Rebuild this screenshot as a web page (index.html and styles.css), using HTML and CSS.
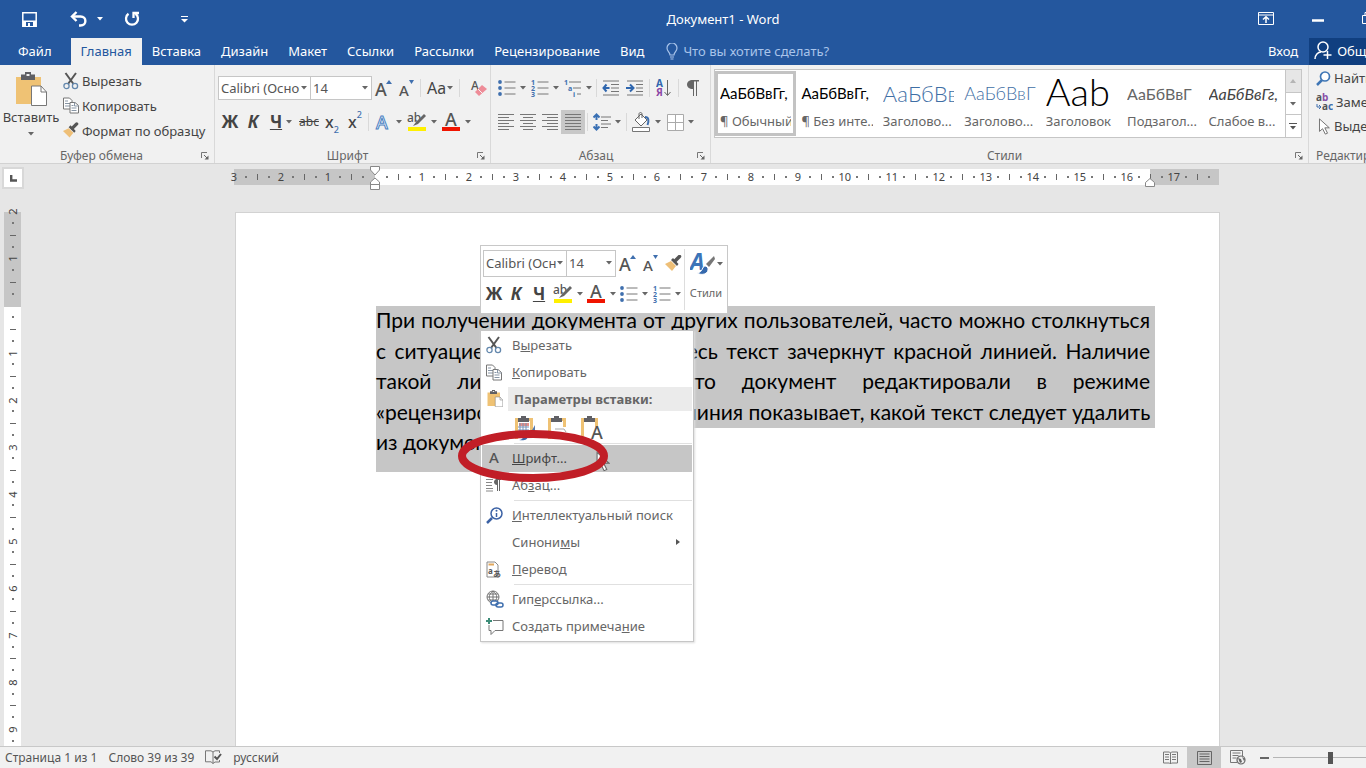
FILE: index.html
```html
<!DOCTYPE html>
<html lang="ru">
<head>
<meta charset="utf-8">
<title>Документ1 - Word</title>
<link rel="stylesheet" href="styles.css">
</head>
<body>
<svg class="defs" aria-hidden="true">
  <symbol id="caret" viewBox="0 0 6 4"><path d="M0 0h6L3 3.600z" fill="#666"/></symbol>
  <symbol id="launch" viewBox="0 0 8 8"><path d="M.5 6V.5H6" fill="none" stroke="#777"/><path d="M3 3l3 3" stroke="#666"/><path d="M7.500 3.500v4h-4z" fill="#666"/></symbol>
  <symbol id="scissors" viewBox="0 0 16 18"><path d="M2.500 1l8 11M13 1L5 12" stroke="#555" stroke-width="2" fill="none"/><circle cx="3.500" cy="14" r="2.600" fill="none" stroke="#6488ad" stroke-width="1.300"/><circle cx="12" cy="14" r="2.600" fill="none" stroke="#6488ad" stroke-width="1.300"/></symbol>
  <symbol id="copy" viewBox="0 0 16 17"><path d="M.5 1h6l2.500 2.500V12H.5z" fill="#fff" stroke="#777"/><path d="M2 4h3M2 6.500h5M2 9h5" stroke="#8795a5"/><path d="M7 5.500h5l3.500 3V16H7z" fill="#fff" stroke="#777"/><path d="M11.500 5.500V9h4M8.500 8.500h2M8.500 11h5M8.500 13.500h5" fill="none" stroke="#8795a5"/></symbol>
  <symbol id="brush" viewBox="0 0 17 17"><path d="M0 9l6-3 5 5-4 5z" fill="#eebf77"/><path d="M6 5l6 6 1.500-2-5.500-6z" fill="#555"/><path d="M10 6l4.500-4.500" stroke="#555" stroke-width="3.500" stroke-linecap="round"/></symbol>
  <symbol id="paste" viewBox="0 0 32 34"><path d="M1 5h25v27H1z" fill="#efc274"/><path d="M6 2.500h4V0h6v2.500h4V8H6z" fill="#5f5f63"/><path d="M11.500 2h3v2h-3z" fill="#efefef"/><path d="M16.500 14H26l5.500 6v13.500h-15z" fill="#fff" stroke="#777"/><path d="M26 14v6h5.500" fill="none" stroke="#777"/></symbol>
  <symbol id="grow" viewBox="0 0 20 18"><text x="1" y="17" class="glyph g18">A</text><path d="M12 5l3-4 3 4z" fill="#3f6fae"/></symbol>
  <symbol id="shrink" viewBox="0 0 20 18"><text x="2" y="17" class="glyph g15">A</text><path d="M12 1h5l-2.500 4z" fill="#3f6fae"/></symbol>
  <symbol id="eraser" viewBox="0 0 18 18"><text x="1" y="11" class="glyph g13">A</text><path d="M5 13l7-7 5 4-8 7z" fill="#ee8c98"/><path d="M8 10l5 5" stroke="#f8f0f1"/></symbol>
  <symbol id="outline-a" viewBox="0 0 18 18"><text x="2" y="16" class="glyph outline">A</text></symbol>
  <symbol id="marker" viewBox="0 0 20 20"><text x="0" y="10" class="glyph g13">ab</text><path d="M17 2l-8 8-3 4 5-2 8-8z" fill="#666"/><path d="M1 15h18v4H1z" fill="#fff000"/></symbol>
  <symbol id="font-color" viewBox="0 0 20 20"><text x="4" y="14" class="glyph g18">A</text><path d="M1 15h18v4H1z" fill="#f01400"/></symbol>
  <symbol id="bullets" viewBox="0 0 18 18"><path d="M6.500 3h11M6.500 9h11M6.500 15h11" stroke="#777"/><circle cx="2" cy="3" r="1.900" fill="#3f6fae"/><circle cx="2" cy="9" r="1.900" fill="#3f6fae"/><circle cx="2" cy="15" r="1.900" fill="#3f6fae"/></symbol>
  <symbol id="numbers" viewBox="0 0 18 18"><path d="M6.500 3h11M6.500 9h11M6.500 15h11" stroke="#777"/><text x="0" y="6" class="tiny">1</text><text x="0" y="12" class="tiny">2</text><text x="0" y="18" class="tiny">3</text></symbol>
  <symbol id="multi" viewBox="0 0 18 18"><path d="M5 3h12M9 9h8M13 15h4" stroke="#777"/><text x="0" y="6" class="tiny">1</text><text x="4" y="12" class="tiny">a</text><text x="9" y="18" class="tiny">i</text></symbol>
  <symbol id="dedent" viewBox="0 0 18 18"><path d="M1 2h16M9 5.500h8M9 9h8M9 12.500h8M1 16h16" stroke="#777"/><path d="M1.500 9h6M4.500 5.500L1.500 9l3 3.500" stroke="#2f66ae" stroke-width="2" fill="none"/></symbol>
  <symbol id="indent" viewBox="0 0 18 18"><path d="M1 2h16M10 5.500h7M10 9h7M10 12.500h7M1 16h16" stroke="#777"/><path d="M0 9h7M4 5.500L7.500 9 4 12.500" stroke="#2f66ae" stroke-width="2" fill="none"/></symbol>
  <symbol id="sort" viewBox="0 0 16 18"><text x="0" y="8" class="sort-a">А</text><text x="0" y="17" class="sort-b">Я</text><path d="M11.500 1v15M8.500 13l3 3.500 3-3.500" fill="none" stroke="#666"/></symbol>
  <symbol id="pilcrow" viewBox="0 0 12 18"><path d="M5.500 1H12v1.500H5.500z" fill="#666"/><path d="M6 1C2 1 0 3 0 5.500S2 10 6 10z" fill="#666"/><path d="M6.500 1v16M9.500 1v16" stroke="#666"/></symbol>
  <symbol id="al-left" viewBox="0 0 16 18"><path d="M0 1.500h16M0 4.500h11M0 7.500h16M0 10.500h11M0 13.500h16M0 16.500h11" stroke="#777"/></symbol>
  <symbol id="al-center" viewBox="0 0 16 18"><path d="M0 1.500h16M3 4.500h10M0 7.500h16M3 10.500h10M0 13.500h16M3 16.500h10" stroke="#777"/></symbol>
  <symbol id="al-right" viewBox="0 0 16 18"><path d="M0 1.500h16M5 4.500h11M0 7.500h16M5 10.500h11M0 13.500h16M5 16.500h11" stroke="#777"/></symbol>
  <symbol id="al-full" viewBox="0 0 16 18"><path d="M0 1.500h16M0 4.500h16M0 7.500h16M0 10.500h16M0 13.500h16M0 16.500h16" stroke="#777"/></symbol>
  <symbol id="spacing" viewBox="0 0 18 18"><path d="M8 4h10M8 7.500h7M8 11h10M8 14.500h7" stroke="#777"/><path d="M3.500 1v6M.5 4.500l3-3 3 3M3.500 11v6M.5 13.500l3 3 3-3" fill="none" stroke="#3a70b4" stroke-width="2"/></symbol>
  <symbol id="bucket" viewBox="0 0 20 20"><path d="M4 8l6-6 6 6-6 6z" fill="#fff" stroke="#666"/><path d="M8 7V2c0-2 3-2 3 0v4" fill="none" stroke="#666"/><path d="M14 5c4 0 4 4 2.500 8" fill="none" stroke="#3f6fae" stroke-width="2"/><path d="M1.500 15.500h17v4h-17z" fill="#fff" stroke="#777"/></symbol>
  <symbol id="borders" viewBox="0 0 17 17"><path d="M.5.5h16v16H.5zM8.500.5v16M.5 8.500h16" fill="#fff" stroke="#aaa"/></symbol>
  <symbol id="style-a" viewBox="0 0 26 26"><text x="0" y="19" class="style-letter">A</text><path d="M24 5l-8 8 3 3 6-8z" fill="#777"/><path d="M16 15c-5 0-2 6-9 7 5 3 12 1 11-5z" fill="#3569ad" stroke="#fff"/></symbol>
  <symbol id="find" viewBox="0 0 15 15"><circle cx="9" cy="5.500" r="4.500" fill="#fff" stroke="#3f76b5" stroke-width="1.700"/><path d="M6 9l-5 5" stroke="#3f76b5" stroke-width="2.500"/></symbol>
  <symbol id="pointer" viewBox="0 0 13 19"><path d="M1 1v14l3.500-3 3 6 2.500-1-3-6h5z" fill="#fff" stroke="#666"/></symbol>
  <symbol id="page-a" viewBox="0 0 16 17"><path d="M1 1h8l3 3v12H1z" fill="#fff" stroke="#888"/><path d="M2.500 3.500H8" stroke="#e0a75c" stroke-width="2"/><text x="2" y="13" class="micro">a</text><text x="7" y="16" class="micro">あ</text></symbol>
  <symbol id="globe" viewBox="0 0 18 18"><circle cx="7" cy="7" r="6" fill="#fff" stroke="#777"/><path d="M7 1v12M1 7h12M2 4h10M2 10h10M7 1C2 5 2 9 7 13M7 1c5 4 5 8 0 12" fill="none" stroke="#777"/><rect x="5" y="11" width="7" height="4" rx="2" fill="#fff" stroke="#3f6fae" stroke-width="1.500"/><rect x="10" y="13" width="7" height="4" rx="2" fill="none" stroke="#3f6fae" stroke-width="1.500"/></symbol>
  <symbol id="comment" viewBox="0 0 18 17"><path d="M7 2.500h10v10H9l-4 4v-4H3V7" fill="#fff" stroke="#777"/><path d="M3 0v6M0 3h6" stroke="#3d8c78" stroke-width="2"/></symbol>
  <symbol id="info" viewBox="0 0 17 17"><circle cx="10.500" cy="6.500" r="5.500" fill="#fff" stroke="#3c62a5" stroke-width="1.500"/><path d="M6 11l-5 5" stroke="#3c62a5" stroke-width="2.500"/><path d="M10.500 6v4" stroke="#3c62a5" stroke-width="1.500"/><circle cx="10.500" cy="3.800" r="1" fill="#3c62a5"/></symbol>
  <symbol id="para" viewBox="0 0 16 14"><path d="M0 1.500h7M0 4.500h6M0 7.500h6M0 10.500h7M0 13h7" stroke="#888"/><path d="M11 1C7 1 7 7 11 7z" fill="#666"/><path d="M11.500 1v12M13.500 1v12M10 1.500h5" stroke="#666"/></symbol>
</svg>

<header class="titlebar">
  <div class="quick">
    <button class="qbtn" aria-label="Сохранить"><svg width="15" height="15" viewBox="0 0 15 15"><path d="M.8.8h13.400v13.400H.8z" fill="none" stroke="#fff" stroke-width="1.500"/><path d="M1 8.500h13V14H1z" fill="#fff"/><path d="M4 10h7v4H4z" fill="#24579e"/><path d="M6 11h2v3H6z" fill="#fff"/></svg></button>
    <button class="qbtn undo" aria-label="Отменить"><svg width="17" height="16" viewBox="0 0 17 16"><path d="M2 5.500h8.500c6.500 0 6.500 9 0 9H9" fill="none" stroke="#fff" stroke-width="2.400"/><path d="M6.500 1L2 5.500 6.500 10" fill="none" stroke="#fff" stroke-width="2.400"/></svg></button>
    <button class="qbtn drop" aria-label="Список отмены"><svg width="6" height="4" viewBox="0 0 6 4"><path d="M0 0h6L3 3.500z" fill="#fff"/></svg></button>
    <button class="qbtn redo" aria-label="Повторить"><svg width="16" height="16" viewBox="0 0 16 16"><path d="M4.500 2.800A6 6 0 1 0 11.500 2.800" fill="none" stroke="#fff" stroke-width="2.300"/><path d="M9.500 7V2H15" fill="none" stroke="#fff" stroke-width="2.300"/></svg></button>
    <button class="qbtn custom" aria-label="Настройка панели"><svg width="7" height="7" viewBox="0 0 7 7"><path d="M0 .5h7" stroke="#fff"/><path d="M0 3h7L3.500 6.500z" fill="#fff"/></svg></button>
  </div>
  <h1 class="doc-title">Документ1 - Word</h1>
  <div class="winbtns">
    <button class="qbtn" aria-label="Параметры ленты"><svg width="16" height="13" viewBox="0 0 16 13"><path d="M.5.5h15v12H.5zM.5 3h15" fill="none" stroke="#fff"/><path d="M8 11V5M5 7.500L8 4.800l3 2.700" fill="none" stroke="#fff" stroke-width="1.500"/></svg></button>
    <button class="qbtn" aria-label="Свернуть"><svg width="12" height="12" viewBox="0 0 12 12"><path d="M0 8.500h12" stroke="#fff" stroke-width="2.500"/></svg></button>
    <button class="qbtn" aria-label="Развернуть"><svg width="12" height="12" viewBox="0 0 12 12"><path d="M.5 3.500h8v8h-8zM3 3V.5h8.500V9H9" fill="none" stroke="#fff"/></svg></button>
  </div>
</header>

<nav class="tabs">
  <button class="tab file">Файл</button>
  <button class="tab active">Главная</button>
  <button class="tab">Вставка</button>
  <button class="tab">Дизайн</button>
  <button class="tab">Макет</button>
  <button class="tab">Ссылки</button>
  <button class="tab">Рассылки</button>
  <button class="tab">Рецензирование</button>
  <button class="tab">Вид</button>
  <label class="tell"><svg width="12" height="17" viewBox="0 0 12 17"><path d="M4 12C4 9 1 8.500 1 5a5 5 0 0 1 10 0c0 3.500-3 4-3 7zM4 14h4M4.500 16h3" fill="none" stroke="#a9c4ea" stroke-width="1.200"/></svg><input type="text" placeholder="Что вы хотите сделать?"></label>
  <div class="account">
    <button class="tab login">Вход</button>
    <button class="share"><svg width="18" height="19" viewBox="0 0 18 19"><circle cx="9" cy="6" r="5" fill="none" stroke="#fff" stroke-width="1.500"/><path d="M1 18c0-4 3-7 6-7M13.500 10v8M9.500 14h8" fill="none" stroke="#fff" stroke-width="1.500"/></svg>Общий доступ</button>
  </div>
</nav>

<section class="ribbon">
  <div class="group clipboard">
    <div class="body">
      <button class="big"><svg width="32" height="34"><use href="#paste"/></svg><span>Вставить</span><svg width="6" height="4"><use href="#caret"/></svg></button>
      <div class="stack">
        <button class="cmd"><svg width="16" height="18"><use href="#scissors"/></svg>Вырезать</button>
        <button class="cmd"><svg width="16" height="17"><use href="#copy"/></svg>Копировать</button>
        <button class="cmd"><svg width="16" height="17"><use href="#brush"/></svg>Формат по образцу</button>
      </div>
    </div>
    <div class="caption"><span>Буфер обмена</span><button class="launch" aria-label="Буфер обмена: параметры"><svg width="8" height="8"><use href="#launch"/></svg></button></div>
  </div>

  <div class="group font">
    <div class="body rows">
      <div class="row">
        <label class="combo c93"><select aria-label="Шрифт"><option>Calibri (Основной текст)</option></select><svg width="6" height="4"><use href="#caret"/></svg></label>
        <label class="combo c61"><select aria-label="Размер"><option>14</option></select><svg width="6" height="4"><use href="#caret"/></svg></label>
        <button class="ib w24" aria-label="Увеличить"><svg width="20" height="18"><use href="#grow"/></svg></button>
        <button class="ib w22" aria-label="Уменьшить"><svg width="20" height="18"><use href="#shrink"/></svg></button>
        <i class="sep"></i>
        <button class="ib w34 case">Аа<svg width="6" height="4"><use href="#caret"/></svg></button>
        <i class="sep"></i>
        <button class="ib w34" aria-label="Очистить"><svg width="18" height="18"><use href="#eraser"/></svg></button>
      </div>
      <div class="row">
        <button class="ib w24 bold">Ж</button>
        <button class="ib w22 bold ital">К</button>
        <button class="ib w34 bold"><u>Ч</u><svg width="6" height="4"><use href="#caret"/></svg></button>
        <button class="ib w22 strike">abc</button>
        <button class="ib w24 xx">x<sub>2</sub></button>
        <button class="ib w22 xx">x<sup>2</sup></button>
        <i class="sep"></i>
        <button class="ib w34" aria-label="Эффекты"><svg width="18" height="18"><use href="#outline-a"/></svg><svg width="6" height="4"><use href="#caret"/></svg></button>
        <button class="ib w34" aria-label="Выделение"><svg width="20" height="20"><use href="#marker"/></svg><svg width="6" height="4"><use href="#caret"/></svg></button>
        <button class="ib w34" aria-label="Цвет"><svg width="20" height="20"><use href="#font-color"/></svg><svg width="6" height="4"><use href="#caret"/></svg></button>
      </div>
    </div>
    <div class="caption"><span>Шрифт</span><button class="launch" aria-label="Шрифт: параметры"><svg width="8" height="8"><use href="#launch"/></svg></button></div>
  </div>

  <div class="group paragraph">
    <div class="body rows">
      <div class="row">
        <button class="ib w33" aria-label="Маркеры"><svg width="18" height="18"><use href="#bullets"/></svg><svg width="6" height="4"><use href="#caret"/></svg></button>
        <button class="ib w33" aria-label="Нумерация"><svg width="18" height="18"><use href="#numbers"/></svg><svg width="6" height="4"><use href="#caret"/></svg></button>
        <button class="ib w33" aria-label="Многоуровневый"><svg width="18" height="18"><use href="#multi"/></svg><svg width="6" height="4"><use href="#caret"/></svg></button>
        <i class="sep"></i>
        <button class="ib w24" aria-label="Уменьшить отступ"><svg width="18" height="18"><use href="#dedent"/></svg></button>
        <button class="ib w24" aria-label="Увеличить отступ"><svg width="18" height="18"><use href="#indent"/></svg></button>
        <i class="sep"></i>
        <button class="ib w24" aria-label="Сортировка"><svg width="16" height="18"><use href="#sort"/></svg></button>
        <i class="sep"></i>
        <button class="ib w24" aria-label="Знаки"><svg width="12" height="18"><use href="#pilcrow"/></svg></button>
      </div>
      <div class="row">
        <button class="ib w22" aria-label="По левому краю"><svg width="16" height="18"><use href="#al-left"/></svg></button>
        <button class="ib w22" aria-label="По центру"><svg width="16" height="18"><use href="#al-center"/></svg></button>
        <button class="ib w22" aria-label="По правому краю"><svg width="16" height="18"><use href="#al-right"/></svg></button>
        <button class="ib w24 on" aria-label="По ширине"><svg width="16" height="18"><use href="#al-full"/></svg></button>
        <i class="sep"></i>
        <button class="ib w34" aria-label="Интервал"><svg width="18" height="18"><use href="#spacing"/></svg><svg width="6" height="4"><use href="#caret"/></svg></button>
        <i class="sep"></i>
        <button class="ib w34" aria-label="Заливка"><svg width="20" height="20"><use href="#bucket"/></svg><svg width="6" height="4"><use href="#caret"/></svg></button>
        <button class="ib w34" aria-label="Границы"><svg width="17" height="17"><use href="#borders"/></svg><svg width="6" height="4"><use href="#caret"/></svg></button>
      </div>
    </div>
    <div class="caption"><span>Абзац</span><button class="launch" aria-label="Абзац: параметры"><svg width="8" height="8"><use href="#launch"/></svg></button></div>
  </div>

  <div class="group styles">
    <div class="gallery">
      <button class="style selected"><span class="sample">АаБбВвГг,</span><span class="name">¶ Обычный</span></button>
      <button class="style"><span class="sample">АаБбВвГг,</span><span class="name">¶ Без инте...</span></button>
      <button class="style"><span class="sample h1s">АаБбВв</span><span class="name">Заголово...</span></button>
      <button class="style"><span class="sample h2s">АаБбВвГ</span><span class="name">Заголово...</span></button>
      <button class="style"><span class="sample ttl">Ааb</span><span class="name">Заголовок</span></button>
      <button class="style"><span class="sample subt">АаБбВвГ</span><span class="name">Подзагол...</span></button>
      <button class="style"><span class="sample weak">АаБбВвГг,</span><span class="name">Слабое в...</span></button>
      <div class="scroller">
        <button class="sc off" aria-label="Вверх"><svg width="6" height="4" viewBox="0 0 6 4"><path d="M0 4h6L3 0z" fill="#b5b5b5"/></svg></button>
        <button class="sc" aria-label="Вниз"><svg width="6" height="4"><use href="#caret"/></svg></button>
        <button class="sc" aria-label="Все стили"><svg width="8" height="7" viewBox="0 0 8 7"><path d="M0 .5h8" stroke="#555"/><path d="M1 3h6L4 6.500z" fill="#555"/></svg></button>
      </div>
    </div>
    <div class="caption"><span>Стили</span><button class="launch" aria-label="Стили: параметры"><svg width="8" height="8"><use href="#launch"/></svg></button></div>
  </div>

  <div class="group editing">
    <div class="stack">
      <button class="cmd"><svg width="15" height="15"><use href="#find"/></svg>Найти</button>
      <button class="cmd"><svg width="17" height="18" viewBox="0 0 17 18"><text x="0" y="8" class="rep">a<tspan fill="#8850a8">b</tspan></text><text x="6" y="17" class="rep">a<tspan fill="#3f6fae">c</tspan></text><path d="M1 11v3h4M3 12l2 2-2 2" fill="none" stroke="#3f6fae"/></svg>Заменить</button>
      <button class="cmd"><svg width="15" height="17" viewBox="-2 0 15 19"><use href="#pointer" width="13" height="19"/></svg>Выделить</button>
    </div>
    <div class="caption"><span>Редактирование</span></div>
  </div>
</section>

<main class="workspace">
  <div class="side">
    <button class="tabstop" aria-label="Табуляция"><svg width="7" height="7" viewBox="0 0 7 7"><path d="M1.200 0v5.500H7" fill="none" stroke="#555" stroke-width="2.400"/></svg></button>
    <div class="vruler" id="vruler"></div>
  </div>
  <div class="canvas">
    <div class="hruler">
      <div class="hmarks" id="hruler"></div>
      <svg class="stop left" width="10" height="24" viewBox="0 0 10 24"><path d="M.5.5h9V4L5 9 .5 4zM5 12l4.500 4v7.500h-9V16zM.5 18.500h9" fill="#fff" stroke="#888"/></svg>
      <svg class="stop right" width="10" height="9" viewBox="0 0 10 9"><path d="M5 .5l4.500 4v4h-9v-4z" fill="#fff" stroke="#888"/></svg>
    </div>
    <article class="page">
      <div class="lines">
        <p>При получении документа от других пользователей, часто можно столкнуться</p>
        <p>с ситуацией, когда часть или весь текст зачеркнут красной линией. Наличие</p>
        <p>такой линии обозначает, что документ редактировали в режиме</p>
        <p>«рецензирования». Эта красная линия показывает, какой текст следует удалить</p>
      </div>
      <p class="last">из документа.</p>
    </article>
  </div>
</main>

<footer class="status">
  <span>Страница 1 из 1</span>
  <span>Слово 39 из 39</span>
  <button class="proof" aria-label="Правописание"><svg width="17" height="15" viewBox="0 0 17 15"><path d="M8 13.500V2L6 .8H.5v11H6zM8 2l2-1.200h4.500V3M8 13.500l2-1.500h4.500v-2" fill="none" stroke="#777"/><path d="M9.500 6.500l2.500 2.500 4-5" fill="none" stroke="#555" stroke-width="2"/></svg></button>
  <span>русский</span>
  <div class="views">
    <button class="view" aria-label="Чтение"><svg width="15" height="14" viewBox="0 0 15 14"><path d="M.5 1h6l1 1 1-1h6v11h-6l-1 1-1-1h-6zM7.500 2v11" fill="none" stroke="#777"/><path d="M2 3.500h4M2 6h4M2 8.500h4M9 3.500h4M9 6h4M9 8.500h4" stroke="#777"/></svg></button>
    <button class="view on" aria-label="Разметка"><svg width="15" height="14" viewBox="0 0 15 14"><path d="M.5.5h14v13H.5z" fill="none" stroke="#666"/><path d="M2.500 3h10M2.500 5.500h10M2.500 8h10M2.500 10.500h10" stroke="#666"/></svg></button>
    <button class="view" aria-label="Веб"><svg width="16" height="15" viewBox="0 0 16 15"><path d="M7 12.500H.5v-12h12V6" fill="none" stroke="#777"/><path d="M2.500 3h8M2.500 5.500h6M2.500 8h4" stroke="#777"/><circle cx="11" cy="10" r="4" fill="#eee" stroke="#666" stroke-width="1.200"/><path d="M8 8l3 1 1 3-2 1zM12 7l3 2-1 2z" fill="#666"/></svg></button>
    <button class="minus" aria-label="Уменьшить масштаб"></button>
    <input class="zoom" type="range" min="0" max="100" value="50" aria-label="Масштаб">
  </div>
</footer>

<div class="mini">
  <div class="mini-main">
    <div class="row">
      <label class="combo c84"><select aria-label="Шрифт"><option>Calibri (Основной текст)</option></select><svg width="6" height="4"><use href="#caret"/></svg></label>
      <label class="combo c49"><select aria-label="Размер"><option>14</option></select><svg width="6" height="4"><use href="#caret"/></svg></label>
      <button class="ib w24" aria-label="Увеличить"><svg width="20" height="18"><use href="#grow"/></svg></button>
      <button class="ib w22" aria-label="Уменьшить"><svg width="20" height="18"><use href="#shrink"/></svg></button>
      <button class="ib w22" aria-label="Формат по образцу"><svg width="17" height="17"><use href="#brush"/></svg></button>
    </div>
    <div class="row">
      <button class="ib w22 bold">Ж</button>
      <button class="ib w22 bold ital">К</button>
      <button class="ib w24 bold"><u>Ч</u></button>
      <button class="ib w33" aria-label="Выделение"><svg width="20" height="20"><use href="#marker"/></svg><svg width="6" height="4"><use href="#caret"/></svg></button>
      <button class="ib w33" aria-label="Цвет"><svg width="20" height="20"><use href="#font-color"/></svg><svg width="6" height="4"><use href="#caret"/></svg></button>
      <button class="ib w33" aria-label="Маркеры"><svg width="18" height="18"><use href="#bullets"/></svg><svg width="6" height="4"><use href="#caret"/></svg></button>
      <button class="ib w33" aria-label="Нумерация"><svg width="18" height="18"><use href="#numbers"/></svg><svg width="6" height="4"><use href="#caret"/></svg></button>
    </div>
  </div>
  <button class="mini-styles"><span><svg width="26" height="26"><use href="#style-a"/></svg><svg width="6" height="4"><use href="#caret"/></svg></span>Стили</button>
</div>

<div class="menu">
  <button class="item"><svg width="16" height="18"><use href="#scissors"/></svg><span>В<u>ы</u>резать</span></button>
  <button class="item"><svg width="16" height="17"><use href="#copy"/></svg><span><u>К</u>опировать</span></button>
  <div class="head"><svg width="16" height="17"><use href="#paste"/></svg><b>Параметры вставки:</b></div>
  <div class="pastes">
    <button class="ib" aria-label="Сохранить форматирование"><svg width="24" height="26" viewBox="0 0 24 26"><path d="M3.500 24V4.500h15V16" fill="none" stroke="#efc274" stroke-width="3"/><path d="M5 3h3V1h5v2h3v4H5z" fill="#606065"/><path d="M6 8h10v3H6z" fill="#e58f87"/><path d="M5 12h11M5 15h11M5 18h9M7 8v12M10 8v12M13 8v12" stroke="#7690b5"/><path d="M22 10v11l-7 1z" fill="#5578ab"/><path d="M6 25c5 0 3-5 9-5 0 5-4 6-9 5z" fill="#3569ad"/></svg></button>
    <button class="ib" aria-label="Объединить"><svg width="24" height="26" viewBox="0 0 24 26"><path d="M3.500 24V4.500h15V12" fill="none" stroke="#efc274" stroke-width="3"/><path d="M5 3h3V1h5v2h3v4H5z" fill="#606065"/><path d="M9 14h9l2 3" fill="none" stroke="#aaa"/></svg></button>
    <button class="ib" aria-label="Только текст"><svg width="24" height="26" viewBox="0 0 24 26"><path d="M3.500 24V4.500h14V12" fill="none" stroke="#efc274" stroke-width="3"/><path d="M5 3h3V1h5v2h3v4H5z" fill="#606065"/><text x="12" y="24" class="glyph g18">A</text></svg></button>
  </div>
  <hr>
  <button class="item hot"><svg width="16" height="16" viewBox="0 0 16 16"><text x="3" y="13" class="glyph g15">A</text></svg><span><u>Ш</u>рифт...</span></button>
  <button class="item"><svg width="16" height="14"><use href="#para"/></svg><span>Аб<u>з</u>ац...</span></button>
  <hr>
  <button class="item"><svg width="17" height="17"><use href="#info"/></svg><span><u>И</u>нтеллектуальный поиск</span></button>
  <button class="item"><i></i><span>Синони<u>м</u>ы</span><svg class="arrow" width="4" height="6" viewBox="0 0 4 6"><path d="M0 0v6l4-3z" fill="#555"/></svg></button>
  <button class="item"><svg width="16" height="17"><use href="#page-a"/></svg><span><u>П</u>еревод</span></button>
  <hr>
  <button class="item"><svg width="18" height="18"><use href="#globe"/></svg><span>Гип<u>е</u>рссылка...</span></button>
  <button class="item"><svg width="18" height="17"><use href="#comment"/></svg><span>Создать примеча<u>н</u>ие</span></button>
</div>

<svg class="cursor" width="14" height="21"><use href="#pointer"/></svg>
<svg class="ring" width="152" height="54" viewBox="0 0 152 54"><ellipse cx="76" cy="27" rx="71" ry="22" fill="none" stroke="#c11e27" stroke-width="8"/></svg>
<script src="ruler.js"></script>
</body>
</html>
```
FILE: styles.css
```css
* { box-sizing: border-box; }
body { margin: 0; height: 100vh; display: flex; flex-direction: column; overflow: hidden; position: relative; font: 13px/18px "Noto Sans", "Open Sans", sans-serif; color: #444; background: #e6e6e6; }
button { border: 0; padding: 0; margin: 0; background: none; font: inherit; color: inherit; white-space: nowrap; }
svg { flex: none; display: block; }
.defs { display: none; }

.glyph { font-family: "Noto Sans", sans-serif; fill: #555; font-weight: 500; }
.g13 { font-size: 12px; }
.g15 { font-size: 15px; }
.g18 { font-size: 18px; }
.outline { font-size: 18px; fill: #fff; stroke: #4a80c2; }
.tiny { font: bold 7px "Noto Sans", sans-serif; fill: #3f6fae; }
.sort-a { font: bold 10px "Noto Sans", sans-serif; fill: #2f66ae; }
.sort-b { font: bold 10px "Noto Sans", sans-serif; fill: #8b45a5; }
.style-letter { font: italic bold 23px "Noto Sans", sans-serif; fill: #3b74b8; }
.rep { font: bold 10px "Noto Sans", sans-serif; fill: #555; }
.micro { font: bold 8px "Noto Sans", "Noto Sans CJK JP", sans-serif; fill: #555; }

.titlebar { flex: none; height: 38px; background: #24579e; color: #fff; display: grid; grid-template-columns: 1fr auto 1fr; align-items: center; overflow: hidden; }
.quick { display: flex; align-items: center; padding-left: 22px; }
.qbtn { display: flex; justify-content: center; }
.undo { margin-left: 33px; }
.drop { margin-left: 10px; }
.redo { margin-left: 21px; }
.custom { margin-left: 41px; }
.doc-title { margin: 0; font-size: 13px; font-weight: 400; padding-left: 80px; }
.winbtns { display: flex; justify-content: flex-end; align-items: center; gap: 38px; margin-right: -8px; padding-bottom: 2px; }

.tabs { flex: none; height: 27px; background: #24579e; color: #fff; display: flex; overflow: hidden; }
.tab { padding: 0 10px 2px; flex: none; }
.file { padding: 0 19px 2px 18px; }
.active { background: #f1f1f1; color: #24579e; }
.tell { display: flex; align-items: center; gap: 5px; padding: 0 0 1px 12px; }
.tell input { width: 200px; border: 0; padding: 0; background: none; font: inherit; color: #fff; }
.tell input::placeholder { color: #a9c4ea; opacity: 1; }
.account { margin-left: auto; display: flex; width: 108px; flex: none; gap: 1px; }
.share { flex: none; background: #103f80; display: flex; align-items: center; gap: 5px; padding: 0 0 2px 5px; }

.ribbon { flex: none; height: 99px; background: #f1f1f1; border-bottom: 1px solid #d2d2d2; display: flex; overflow: hidden; }
.group { flex: none; display: flex; flex-direction: column; border-right: 1px solid #d9d9d9; padding: 4px 3px 0; }
.clipboard { width: 215px; padding-top: 3px; padding-left: 2px; }
.font { width: 276px; }
.paragraph { width: 220px; padding-left: 4px; }
.styles { width: 598px; }
.editing { border: 0; width: 150px; padding-left: 7px; }
.body { flex: 1; display: flex; }
.caption { height: 15px; margin-top: auto; display: flex; align-items: center; font-size: 12px; line-height: 15px; color: #666; }
.caption span { flex: 1; text-align: center; }
.launch { width: 10px; }
.editing .caption span { text-align: left; }
.big { width: 58px; display: flex; flex-direction: column; align-items: center; padding-top: 4px; gap: 2px; justify-content: flex-start; }
.big svg:last-child { margin-top: 4px; }
.stack { display: flex; flex-direction: column; }
.clipboard .stack { padding-left: 3px; }
.cmd { display: flex; align-items: center; gap: 3px; height: 25px; }
.editing .cmd { height: 24px; }
.editing .stack { margin-top: -3px; }

.rows { flex-direction: column; padding-top: 7px; gap: 10px; }
.row { display: flex; align-items: center; height: 24px; }
.ib { display: flex; align-items: center; justify-content: center; height: 24px; gap: 4px; flex: none; }
.w22 { width: 22px; }
.w24 { width: 24px; }
.w33 { width: 33px; }
.w34 { width: 34px; }
.on { background: #c8c8c8; }
.sep { width: 1px; height: 18px; background: #d9d9d9; margin: 0 2px; flex: none; }
.bold { font-size: 17px; font-weight: 700; }
.ital { font-style: italic; }
.strike { font-size: 12px; text-decoration: line-through; }
.case { font-size: 16px; gap: 1px; }
.xx { font-size: 16px; font-weight: 500; gap: 0; }
.xx sub, .xx sup { font-size: 9px; line-height: 9px; color: #3f6fae; }
.xx sub { align-self: flex-end; }
.xx sup { align-self: flex-start; }

.combo { display: grid; height: 24px; border: 1px solid #c6c6c6; background: #fff; align-items: center; flex: none; }
.combo + .combo { border-left: 0; }
.combo select { grid-area: 1 / 1; appearance: none; border: 0; background: none; padding: 0 0 0 2px; margin-right: 10px; min-width: 0; font: inherit; color: #555; overflow: hidden; text-overflow: clip; }
.combo svg { grid-area: 1 / 1; justify-self: end; margin-right: 3px; }
.c93 { width: 93px; }
.c61 { width: 61px; }
.c84 { width: 84px; }
.c49 { width: 49px; }

.gallery { display: flex; height: 69px; border: 1px solid #c6c6c6; background: #fff; margin-right: 3px; }
.style { flex: 1 1 0; min-width: 0; display: flex; flex-direction: column; align-items: stretch; text-align: left; margin: 1px 0; border: 3px solid transparent; padding: 0 2px; }
.selected { border-color: #c3c3c3; }
.sample { height: 39px; line-height: 39px; overflow: hidden; font-family: "Lato", "Noto Sans", sans-serif; font-size: 15px; color: #000; }
.name { overflow: hidden; line-height: 16px; color: #666; }
.h1s { font-size: 22px; font-weight: 300; color: #3f6fa5; }
.h2s { font-size: 18px; font-weight: 300; color: #3f6fa5; }
.ttl { font-size: 38px; font-weight: 300; line-height: 34px; }
.subt { color: #666; font-size: 16px; }
.weak { font-style: italic; color: #444; font-size: 16px; }
.scroller { width: 16px; flex: none; display: flex; flex-direction: column; border-left: 1px solid #c6c6c6; }
.sc { flex: 1; display: flex; align-items: center; justify-content: center; border-bottom: 1px solid #c6c6c6; }
.sc:last-child { border-bottom: 0; }
.off { background: #e6e6e6; }

.workspace { flex: 1; min-height: 0; display: flex; overflow: hidden; }
.side { width: 24px; flex: none; display: flex; flex-direction: column; }
.tabstop { width: 22px; height: 22px; margin: 3px 0 0 2px; background: #fff; border: 2px solid #d8d8d8; display: flex; align-items: center; justify-content: center; flex: none; }
.vruler { width: 17px; margin: 17px 0 0 4px; flex: 1; min-height: 0; overflow: hidden; background: linear-gradient(#e6e6e6 6px, #c6c6c6 6px, #c6c6c6 101px, #fff 101px); font-size: 11px; color: #444; }
.vmarks { display: grid; grid-template-columns: 17px; place-items: center; height: 541px; grid-auto-rows: 1fr; }
.vmarks b { font-weight: 400; line-height: 11px; width: 11px; height: 11px; display: flex; align-items: center; justify-content: center; transform: rotate(-90deg); }
.canvas { flex: 1; min-width: 0; }
.hruler { position: relative; width: 985px; height: 16px; margin: 5px 0 0 210px; background: linear-gradient(90deg, #c6c6c6 141px, #fff 141px, #fff 916px, #c6c6c6 916px); }
.hmarks { display: grid; grid-auto-flow: column; grid-auto-columns: 1fr; width: 987px; margin-left: -6px; font-size: 11px; line-height: 16px; color: #444; }
.hmarks b { font-weight: 400; display: flex; justify-content: center; align-items: center; height: 16px; min-width: 0; }
.dot::before { content: ""; width: 2px; height: 2px; background: #777; display: block; }
.dash::before { content: ""; width: 1px; height: 6px; background: #666; display: block; }
.stop { position: absolute; }
.left { left: 136px; top: -3px; }
.right { left: 911px; top: 9px; }
.page { width: 985px; height: 700px; margin: 27px 0 0 211px; background: #fff; border: 1px solid #d2d2d2; padding: 93px 64px 0 140px; font-family: "Lato", "Noto Sans", sans-serif; font-size: 21px; color: #000; }
.page p { margin: 0; }
.lines { height: 122px; display: flex; flex-direction: column; background: #c6c6c6; padding-right: 5px; }
.lines p { flex: 1; line-height: 28px; text-align: justify; text-align-last: justify; white-space: nowrap; }
.last { width: 125px; height: 44px; line-height: 28px; background: #c6c6c6; white-space: nowrap; }

.status { flex: none; height: 22px; background: #f1f1f1; border-top: 1px solid #c8c8c8; display: flex; align-items: center; gap: 11px; padding-left: 5px; font-size: 12px; overflow: hidden; color: #555; }
.views { margin-left: auto; display: flex; align-items: center; width: 213px; height: 21px; flex: none; }
.view { width: 34px; height: 21px; display: flex; align-items: center; justify-content: center; flex: none; }
.minus { width: 9px; height: 2px; background: #666; margin: 0 4px 0 5px; flex: none; }
.zoom { appearance: none; width: 114px; height: 14px; margin: 0; flex: none; background: linear-gradient(#b5b5b5, #b5b5b5) center / 100% 1px no-repeat; }
.zoom::-webkit-slider-thumb { appearance: none; width: 5px; height: 12px; background: #555; }

.mini { position: absolute; left: 480px; top: 245px; width: 248px; height: 69px; background: #fff; border: 1px solid #c8c8c8; display: flex; padding: 3px 0 3px 2px; }
.mini-main { flex: 1; display: flex; flex-direction: column; gap: 3px; }
.mini .combo { height: 27px; }
.mini .row { height: 28px; }
.mini-styles { width: 43px; border-left: 1px solid #ddd; display: flex; flex-direction: column; align-items: center; gap: 8px; font-size: 11px; line-height: 16px; color: #666; }
.mini-styles span { display: flex; align-items: center; gap: 1px; padding-top: 2px; }

.menu { position: absolute; left: 480px; top: 330px; width: 214px; background: #fff; border: 1px solid #c6c6c6; padding: 1px; color: #666; box-shadow: 1px 1px 2px #ddd; display: flex; flex-direction: column; }
.item { height: 27px; display: grid; grid-template-columns: 26px 1fr auto; align-items: center; text-align: left; padding: 0 0 1px 4px; }
.hot { background: #c6c6c6; color: #444; }
.arrow { margin-right: 12px; }
.head { height: 25px; display: flex; align-items: center; gap: 5px; padding-left: 5px; }
.head b { flex: 1; background: #ebebeb; padding: 3px 0 3px 6px; }
.pastes { height: 31px; display: flex; align-items: flex-end; padding-left: 31px; gap: 9px; }
.pastes .ib { height: 28px; }
.menu hr { width: 178px; height: 1px; border: 0; background: #e0e0e0; margin: 1px 0 1px auto; flex: none; }
.cursor { position: absolute; left: 596px; top: 451px; }
.ring { position: absolute; left: 457px; top: 429px; }
```
FILE: ruler.js
```js
function fillRuler(host, first, count) {
  for (let i = 0; i < count; i++) {
    const mark = document.createElement('b');
    const quarter = i % 4;
    const value = Math.abs(i / 4 - first);
    if (quarter === 0) mark.textContent = value ? value : '';
    else mark.className = quarter === 2 ? 'dash' : 'dot';
    host.append(mark);
  }
}
fillRuler(document.getElementById('hruler'), 3, 84);
const column = document.createElement('div');
column.className = 'vmarks';
document.getElementById('vruler').append(column);
fillRuler(column, 2, 46);
```
